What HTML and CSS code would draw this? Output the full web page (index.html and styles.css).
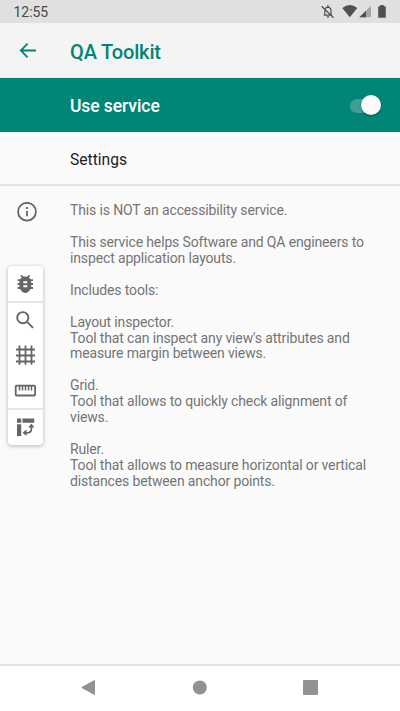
FILE: index.html
```
<!DOCTYPE html>
<html lang="en">
<head>
<meta charset="utf-8">
<title>QA Toolkit</title>
<link rel="stylesheet" href="styles.css">
</head>
<body>
<div class="status">
  <span class="clock">12:55</span>
  <svg class="status-icons" width="70" height="23" viewBox="320 0 70 23">
    <g fill="none" stroke="#505050" stroke-width="1.2">
      <path d="M323.8 15.2h8.4M324.8 15v-4.500q0-3 3-3.400q3.200.4 3.200 3.500v4.400M321.700 6.200l11.800 11.600"/>
    </g>
    <path fill="#505050" d="M326.700 16.200h2.500q-.2 1.600-1.250 1.600t-1.250-1.600zM327.200 5.200h1.500v2h-1.500zM342.300 8q7.500-5.800 15 0l-7.500 9.300z"/>
    <path fill="#a5a5a5" d="M371 5.700v11.600h-11.600z"/>
    <path fill="#505050" d="M366 10.700v6.600h-6.600z"/>
    <path fill="#505050" d="M380.300 5h3.400v1.200h1.200q.9 0 .9.900v9.800q0 .9-.9.900h-5.800q-.9 0-.9-.9V7.100q0-.9.9-.9h1.200z"/>
  </svg>
</div>
<header class="appbar">
  <svg class="back" width="18" height="16" viewBox="0 0 18 16"><path d="M17 8.500H2M8.600 1.700L1.800 8.500l6.800 6.800"/></svg>
  <h1>QA Toolkit</h1>
</header>
<div class="service">
  <span>Use service</span>
  <div class="switch"><div class="thumb"></div></div>
</div>
<div class="settings">Settings</div>
<main class="info">
  <svg class="info-icon" width="20" height="20" viewBox="0 0 20 20"><circle cx="10" cy="9.700" r="8.900"/><path d="M10 8.900v5.400M10 5.100v1.900"/></svg>
  <div class="copy">
    <p>This is NOT an accessibility service.</p>
    <p>This service helps Software and QA engineers to<br>inspect application layouts.</p>
    <p>Includes tools:</p>
    <p>Layout inspector.<br>Tool that can inspect any view's attributes and<br>measure margin between views.</p>
    <p>Grid.<br>Tool that allows to quickly check alignment of<br>views.</p>
    <p>Ruler.<br>Tool that allows to measure horizontal or vertical<br>distances between anchor points.</p>
  </div>
</main>
<nav class="navbar">
  <svg width="16" height="18" viewBox="0 0 16 18"><path d="M14.500 1.500v14L1.800 8.500z" stroke="#929292" stroke-linejoin="round"/></svg>
  <svg width="16" height="16" viewBox="0 0 16 16"><circle cx="7.800" cy="7.500" r="7"/></svg>
  <svg width="16" height="16" viewBox="0 0 16 16"><rect width="15" height="15" rx="1"/></svg>
</nav>
<aside class="tools">
  <div class="tool bug">
    <svg width="35" height="35" viewBox="8 265.300 35 35">
      <path fill="#666" d="M33 278.500h-2.600c-.4-.8-1-1.300-1.600-1.700l1.500-1.500-1.300-1.300-2 2a6 6 0 0 0-3.400 0l-2-2-1.300 1.300 1.500 1.500c-.6.4-1.200.9-1.600 1.700h-2.600v1.900h1.900l-.1 2h-1.800v2h1.800l.1 2h-1.900v1.900h2.600c2.500 5.200 7.700 5.200 10.200 0H33v-1.900h-1.900l.1-2H33v-2h-1.800l-.1-2H33z"/>
      <path fill="#fff" d="M23.300 280.500h4v2h-4zM23.300 284.500h4v2h-4z"/>
    </svg>
  </div>
  <div class="tool">
    <svg width="35" height="35" viewBox="8 303 35 35"><g fill="none" stroke="#666" stroke-width="1.900"><circle cx="22.800" cy="317.700" r="5.600"/><path d="M26.800 321.700l6.200 6.200"/></g></svg>
  </div>
  <div class="tool">
    <svg width="35" height="35" viewBox="8 338 35 35"><path fill="none" stroke="#666" stroke-width="1.800" d="M19.500 345.600v19.200M25.500 345.600v19.200M31.500 345.600v19.200M16 349.500h19M16 355.500h19M16 361.500h19"/></svg>
  </div>
  <div class="tool">
    <svg width="35" height="35" viewBox="8 373 35 35"><g fill="none" stroke="#666" stroke-width="1.800"><rect x="15.700" y="385.700" width="19.400" height="9.800" rx="1"/><path stroke-width="1.500" d="M19.500 386v4.500M22.500 386v4.500M25.500 386v4.500M28.500 386v4.500M31.500 386v4.500"/></g></svg>
  </div>
  <div class="tool rotate">
    <svg width="35" height="35" viewBox="8 410 35 35">
      <path fill="#666" d="M17 418.500h4.200v4.300H17zM22.500 418.500h11.700v4.300H22.500zM17 424.300h4.200V436H17z"/>
      <path fill="none" stroke="#666" stroke-width="1.700" d="M31.400 425.800v3q0 4-4 4h-2.700"/>
      <path fill="#666" d="M31.400 423.400l3.100 4h-6.200zM22.500 432.800l4-3.200v6.400z"/>
    </svg>
  </div>
</aside>
</body>
</html>
```
FILE: styles.css
```
* { box-sizing: border-box; }
body {
  margin: 0;
  width: 400px;
  height: 711px;
  overflow: hidden;
  position: relative;
  display: flex;
  flex-direction: column;
  background: #fafafa;
  font-family: Roboto, sans-serif;
}
svg { display: block; flex: none; }
.status {
  height: 23px;
  flex: none;
  background: #e0e0e0;
  display: flex;
  align-items: center;
  justify-content: space-between;
  padding: 0 10px 0 13.500px;
}
.clock {
  font-size: 14px;
  line-height: 16px;
  font-weight: 400;
  letter-spacing: -.050px;
  color: #484848;
  padding-top: 1px;
}
.appbar {
  height: 55px;
  flex: none;
  background: #f4f4f4;
  border-bottom: 1px solid #e6e9e9;
  display: flex;
  align-items: center;
  padding-left: 19px;
}
.back { fill: none; stroke: #018577; stroke-width: 1.800; }
h1 {
  margin: 3px 0 0 33px;
  font-size: 20px;
  line-height: 24px;
  font-weight: 500;
  letter-spacing: -.150px;
  color: #018577;
}
.service {
  height: 54px;
  flex: none;
  background: #018577;
  color: #fff;
  font-size: 17.500px;
  font-weight: 500;
  letter-spacing: -.080px;
  display: flex;
  align-items: center;
  justify-content: space-between;
  padding: 1px 19px 0 70px;
}
.switch {
  width: 31px;
  height: 14px;
  border-radius: 7px;
  background: #409f94;
  display: flex;
  align-items: center;
  justify-content: flex-end;
}
.thumb {
  width: 20px;
  height: 20px;
  flex: none;
  border-radius: 50%;
  background: #fafafa;
  box-shadow: 0 1px 2px rgba(0, 0, 0, .35);
  margin-top: -1px;
}
.settings {
  height: 54px;
  flex: none;
  border-bottom: 2px solid #e3e3e3;
  padding: 18px 0 0 70px;
  font-size: 15.600px;
  line-height: 20px;
  color: #212121;
}
.info {
  flex: 1;
  display: flex;
  align-items: flex-start;
  padding: 16px 0 0 17px;
}
.info-icon { fill: none; stroke: #666; stroke-width: 1.800; }
.copy {
  margin: 1px 0 0 33px;
  font-size: 14px;
  letter-spacing: -.140px;
  line-height: 15.940px;
  color: #757575;
  white-space: nowrap;
}
p { margin: 0 0 15.940px; }
.navbar {
  height: 47px;
  flex: none;
  background: #fff;
  border-top: 2px solid #e3e3e3;
  display: flex;
  align-items: center;
  justify-content: space-between;
  padding: 0 81px 2px 80px;
  fill: #929292;
}
.tools {
  position: absolute;
  left: 8px;
  top: 266px;
  width: 35px;
  height: 179px;
  border-radius: 4px;
  background: #fff;
  box-shadow: 0 1px 4px rgba(0, 0, 0, .28);
}
.tool { height: 35px; }
.bug { height: 37px; border-bottom: 2px solid #e6e6e6; }
.rotate { height: 37px; border-top: 2px solid #e6e6e6; }
```
